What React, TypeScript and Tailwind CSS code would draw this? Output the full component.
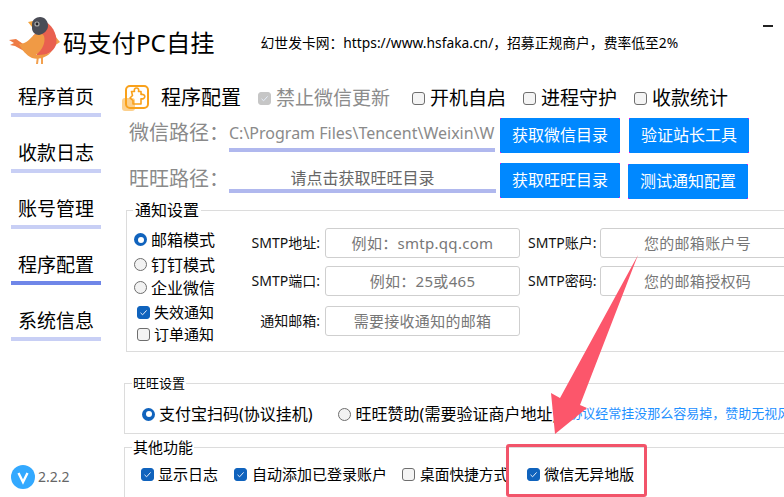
const navItems = ["程序首页", "收款日志", "账号管理", "程序配置", "系统信息"];

const Check = ({ on, dim }: { on?: boolean; dim?: boolean }) => (
  <span
    className={`flex w-[13px] h-[13px] shrink-0 items-center justify-center rounded-[3px] border ${
      dim ? "bg-[#c6c6c6] border-[#c6c6c6]" : on ? "bg-[#1063bd] border-[#1063bd]" : "bg-[#f4f4f4] border-[#6e6e6e]"
    }`}
  >
    {(on || dim) && (
      <svg viewBox="0 0 13 13" className="w-[13px] h-[13px] shrink-0">
        <path d="M3.5 6.8 L5.6 8.8 L9.6 4.4" fill="none" stroke="#e6eefa" strokeWidth="1" />
      </svg>
    )}
  </span>
);

const Radio = ({ on }: { on?: boolean }) =>
  on ? (
    <span className="flex w-[13px] h-[13px] shrink-0 items-center justify-center rounded-full bg-[#1063bd]">
      <span className="w-[6px] h-[6px] rounded-full bg-white" />
    </span>
  ) : (
    <span className="block w-[13px] h-[13px] shrink-0 rounded-full border border-[#6e6e6e] bg-[#f2f2f2]" />
  );

const Btn = ({ label, className }: { label: string; className?: string }) => (
  <button className={`relative w-[120px] h-[35px] shrink-0 bg-[#0088ff] text-white text-[16px] leading-[35px] text-center ${className ?? ""}`}>
    {label}
    <span className="absolute left-0 top-0 w-px h-px bg-[#ff00e0]" />
    <span className="absolute right-0 top-0 w-px h-px bg-[#ff00e0]" />
    <span className="absolute left-0 bottom-0 w-px h-px bg-[#ff00e0]" />
    <span className="absolute right-0 bottom-0 w-px h-px bg-[#ff00e0]" />
  </button>
);

const Field = ({ label, hint, labelW, className }: { label: string; hint: string; labelW: string; className?: string }) => (
  <div className={`flex items-center ${className ?? ""}`}>
    <span className={`${labelW} text-right text-[14px] leading-[30px] whitespace-nowrap text-[#111]`}>{label}</span>
    <div className="ml-[5px] w-[195px] h-[30px] rounded-[3px] border border-[#cfcfcf] text-center text-[15px] leading-[28px] tracking-[0.3px] text-[#777] whitespace-nowrap">
      {hint}
    </div>
  </div>
);

const Bird = () => (
  <svg viewBox="9 15 52 50" className="w-[52px] h-[50px] shrink-0">
    <path d="M55 36 L60 42 L54 46 Z" fill="#f0a04b" />
    <path d="M46 22 C54 27 58 37 56 45 C53 53 45 56 37 56 L33 36 Z" fill="#e9604f" />
    <path d="M9 40 L16 39 L26 46 L24 51 L15 46 L10 45 L14 43 Z" fill="#ee7b45" />
    <path d="M37 56 L36 64 L38 64 L39 56 Z M41 56 L41 64 L43 64 L43 56 Z" fill="#f2a04e" />
    <path d="M19 44 C27 44 30 38 34 35 C38 33 42 33 44 36 C46 43 42 50 36 55 C44 55 49 54 52 51 C47 58 38 60 32 58 C26 55 22 50 19 44 Z" fill="#f09a45" />
    <path d="M32 27 L28 22 L33 21 Z" fill="#f2a038" />
    <path d="M32 24 C32 20 36 17 40 17 C45 17 48 21 48 26 C48 30 44 34 39 35 C35 35 32 32 32 28 Z" fill="#4a4c56" />
    <circle cx="37" cy="24" r="2.6" fill="#a8a8a8" />
    <circle cx="37" cy="24" r="1.4" fill="#26262c" />
  </svg>
);

const PuzzleIcon = () => (
  <div className="relative w-[28px] h-[28px] ml-[2px] shrink-0">
    <div className="absolute left-[3px] top-[1px] w-[24px] h-[24px] rounded-[5px] border-2 border-[#f9a11b] bg-white" />
    <svg viewBox="0 0 24 24" className="absolute left-[3px] top-[1px] w-[24px] h-[24px]">
      <path
        d="M6.5 6.5 H9.5 C8.8 4.5 9.8 3 11.5 3 C13.2 3 14.2 4.5 13.5 6.5 H16 V9.5 C18 9 19.8 10 19.8 11.6 C19.8 13.2 18 14.2 16 13.7 V19 H8 V15.5 L5 13 L7.5 10.5 Z"
        fill="none"
        stroke="#f9a11b"
        strokeWidth="1.6"
        strokeLinejoin="round"
      />
    </svg>
    <div className="absolute left-0 top-[14px] w-[13px] h-[13px] rounded-[3px] bg-[#f9a11b]/50" />
  </div>
);

export default function App() {
  return (
    <div className="relative w-[784px] h-[497px] overflow-hidden bg-white text-black font-['Noto_Sans','Noto_Sans_CJK_SC',sans-serif]">
      {/* header */}
      <div className="flex h-[78px] items-start">
        <div className="ml-[9px] mt-[15px]">
          <Bird />
        </div>
        <span className="ml-[2px] mt-[26px] text-[24.3px] leading-[34px] whitespace-nowrap">码支付PC自挂</span>
        <span className="ml-[46px] mt-[33px] text-[13.8px] leading-[20px] whitespace-nowrap">
          幻世发卡网：https://www.hsfaka.cn/，招募正规商户，费率低至2%
        </span>
        <span className="ml-auto mr-[11px] mt-[25px] w-[10px] h-[2px] shrink-0 bg-[#222]" />
      </div>

      <div className="flex">
        {/* sidebar */}
        <div className="w-[120px] h-[419px] shrink-0 flex flex-col pl-[11px] pt-[6px]">
          <div className="flex flex-col gap-[23px]">
            {navItems.map((item) => (
              <div
                key={item}
                className={`w-[90px] pb-[3px] border-b-4 text-center text-[19px] leading-[26px] ${
                  item === "程序配置" ? "border-[#6f86e8]" : "border-[#c8cff5]"
                }`}
              >
                {item}
              </div>
            ))}
          </div>
          <div className="mt-auto mb-[8px] flex items-center gap-[3px]">
            <span className="flex w-[24px] h-[24px] items-center justify-center rounded-full bg-[#33a9ff]">
              <svg viewBox="0 0 24 24" className="w-[24px] h-[24px]">
                <path d="M7.5 8 L12 17 L16.5 8" fill="none" stroke="#fff" strokeWidth="2.4" />
              </svg>
            </span>
            <span className="text-[14px] leading-[20px] text-[#666]">2.2.2</span>
          </div>
        </div>

        {/* main */}
        <div className="flex-1 min-w-0">
          <div className="flex h-[40px] items-center whitespace-nowrap">
            <PuzzleIcon />
            <span className="ml-[11px] text-[20px] leading-[28px]">程序配置</span>
            <span className="ml-[17px]">
              <Check dim />
            </span>
            <span className="ml-[5px] text-[19px] leading-[28px] text-[#8c8c8c]">禁止微信更新</span>
            <span className="ml-[22px]">
              <Check />
            </span>
            <span className="ml-[5px] text-[19px] leading-[28px]">开机自启</span>
            <span className="ml-[17px]">
              <Check />
            </span>
            <span className="ml-[5px] text-[19px] leading-[28px]">进程守护</span>
            <span className="ml-[17px]">
              <Check />
            </span>
            <span className="ml-[5px] text-[19px] leading-[28px]">收款统计</span>
          </div>

          <div className="flex h-[35px]">
            <span className="ml-[9px] w-[100px] shrink-0 text-[20px] leading-[30px] text-[#8a8a8a] whitespace-nowrap">微信路径：</span>
            <div className="w-[266px] h-[34px] shrink-0 overflow-hidden border-b-4 border-[#b0b8ee] text-[16px] leading-[30px] text-[#8a8a8a] whitespace-nowrap">
              C:\Program Files\Tencent\Weixin\W
            </div>
            <Btn label="获取微信目录" className="ml-[5px]" />
            <Btn label="验证站长工具" className="ml-[9px]" />
          </div>

          <div className="flex h-[35px] mt-[10px]">
            <span className="ml-[9px] w-[100px] shrink-0 text-[20px] leading-[32px] text-[#8a8a8a] whitespace-nowrap">旺旺路径：</span>
            <div className="w-[267px] h-[30px] shrink-0 border-b-4 border-[#b0b8ee] text-center text-[16px] leading-[30px] text-[#666] whitespace-nowrap">
              请点击获取旺旺目录
            </div>
            <Btn label="获取旺旺目录" className="ml-[4px]" />
            <Btn label="测试通知配置" className="ml-[8px] mt-px" />
          </div>

          {/* 通知设置 */}
          <fieldset className="ml-[6px] mt-[2px] w-[700px] h-[152px] border border-[#dcdcdc]">
            <legend className="ml-[6px] px-[2px] text-[16px] leading-[20px]">通知设置</legend>
            <div className="flex pt-[8px]">
              <div className="w-[118px] shrink-0 pl-[7px] whitespace-nowrap">
                <div className="flex h-[23px] items-center gap-[4px] text-[16px]">
                  <Radio on />
                  邮箱模式
                </div>
                <div className="flex h-[23px] mt-[2px] items-center gap-[4px] text-[16px]">
                  <Radio />
                  钉钉模式
                </div>
                <div className="flex h-[23px] items-center gap-[4px] text-[16px]">
                  <Radio />
                  企业微信
                </div>
                <div className="flex h-[23px] mt-[2px] ml-[3px] items-center gap-[4px] text-[15px]">
                  <Check on />
                  失效通知
                </div>
                <div className="flex h-[23px] mt-[-1px] ml-[3px] items-center gap-[4px] text-[15px]">
                  <Check />
                  订单通知
                </div>
              </div>
              <div>
                <div className="flex">
                  <Field label="SMTP地址:" hint="例如：smtp.qq.com" labelW="w-[75px]" />
                  <Field label="SMTP账户:" hint="您的邮箱账户号" labelW="w-[67px]" className="ml-[8px]" />
                </div>
                <div className="flex mt-[8px]">
                  <Field label="SMTP端口:" hint="例如：25或465" labelW="w-[75px]" />
                  <Field label="SMTP密码:" hint="您的邮箱授权码" labelW="w-[67px]" className="ml-[8px]" />
                </div>
                <div className="flex mt-[10px]">
                  <Field label="通知邮箱:" hint="需要接收通知的邮箱" labelW="w-[75px]" />
                </div>
              </div>
            </div>
          </fieldset>

          {/* 旺旺设置 */}
          <fieldset className="ml-[4px] mt-[21px] w-[702px] h-[61px] border border-[#dcdcdc]">
            <legend className="ml-[7px] px-[1px] text-[13px] leading-[20px]">旺旺设置</legend>
            <div className="flex h-[24px] mt-[9px] ml-[17px] items-center whitespace-nowrap text-[16px]">
              <Radio on />
              <span className="ml-[4px] shrink-0">支付宝扫码(协议挂机)</span>
              <span className="ml-[25px] shrink-0">
                <Radio />
              </span>
              <span className="ml-[5px] shrink-0">旺旺赞助(需要验证商户地址)</span>
              <span className="ml-[12px] shrink-0 text-[13px] text-[#1e90ff]">协议经常挂没那么容易掉，赞助无视风控</span>
            </div>
          </fieldset>

          {/* 其他功能 */}
          <fieldset className="ml-[4px] mt-[3px] w-[702px] h-[80px] border border-[#dcdcdc]">
            <legend className="ml-[7px] px-[1px] text-[15px] leading-[20px]">其他功能</legend>
            <div className="flex h-[24px] mt-[5px] ml-[16px] items-center whitespace-nowrap text-[15px]">
              <Check on />
              <span className="ml-[4px]">显示日志</span>
              <span className="ml-[16px]">
                <Check on />
              </span>
              <span className="ml-[5px]">自动添加已登录账户</span>
              <span className="ml-[15px]">
                <Check />
              </span>
              <span className="ml-[5px] text-[14.7px]">桌面快捷方式</span>
              <span className="ml-[19px]">
                <Check on />
              </span>
              <span className="ml-[4px]">微信无异地版</span>
            </div>
          </fieldset>
        </div>
      </div>

      {/* annotation drawn over the screenshot */}
      <div className="absolute left-[506px] top-[444px] w-[141px] h-[53px] rounded-[3px] border-[3px] border-[#f2546a]" />
      <svg viewBox="0 0 784 497" className="absolute left-0 top-0 w-[784px] h-[497px] pointer-events-none">
        <polygon points="638,255 580,405 587,408 555,434 551,393 560,398" fill="#fc566b" />
      </svg>
    </div>
  );
}
